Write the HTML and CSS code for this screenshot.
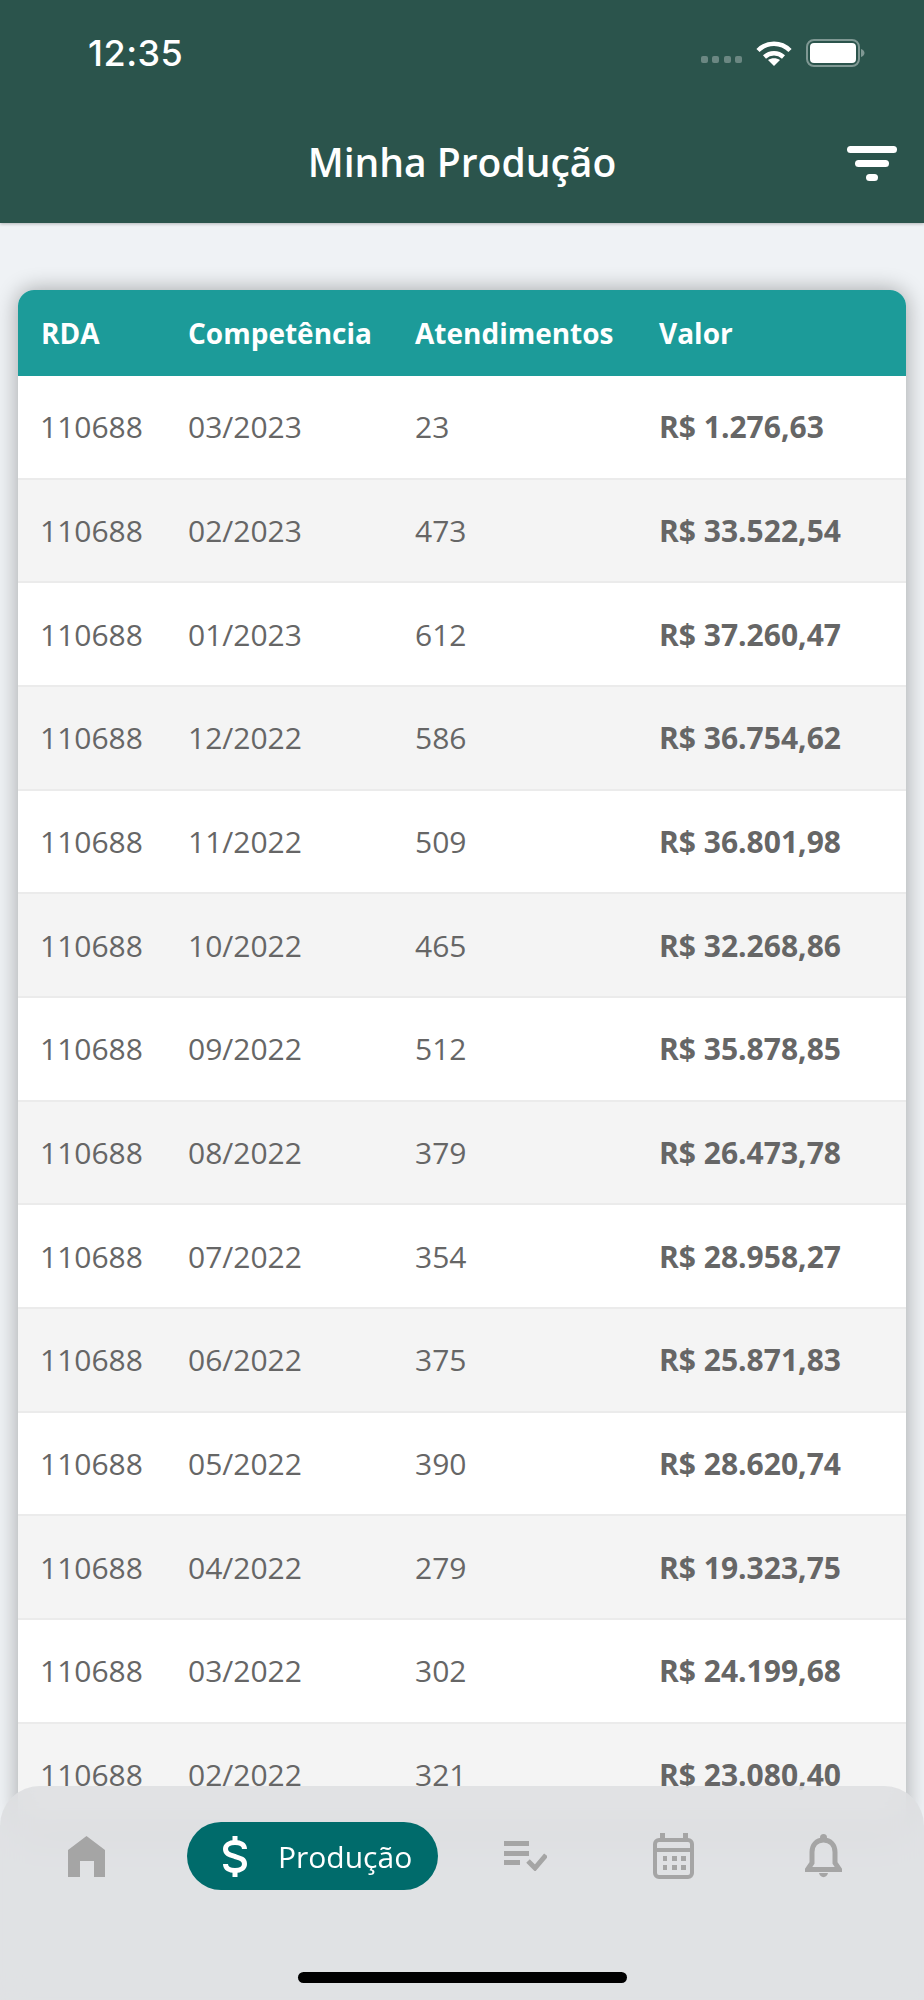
FILE: index.html
```html
<!DOCTYPE html>
<html lang="pt-BR">
<head>
  <meta charset="UTF-8">
  <title>Minha Produção</title>
  <meta name="viewport" content="width=device-width, initial-scale=1.0" />
  <link rel="stylesheet" href="styles.css">
</head>
<body>

  <header class="top-bar">
    <div class="status-bar">
      <span class="clock">12:35</span>
      <div class="status-icons">
        <div class="signal"><i></i><i></i><i></i><i></i></div>
        <svg class="wifi" width="36" height="27" viewBox="0 0 36 27">
          <path d="M2 11.500C11 2.500 25 2.500 34 11.500M8.500 18C14 13 22 13 27.500 18" fill="none" stroke="#fff" stroke-width="4.500" />
          <path d="M18 27L12 21C15.500 18.500 20.500 18.500 24 21Z" fill="#fff" />
        </svg>
        <svg class="battery" width="59" height="28" viewBox="0 0 59 28">
          <rect x="1" y="1" width="52" height="26" rx="7" fill="none" stroke="#fff" stroke-opacity=".4" stroke-width="2" />
          <rect x="4" y="4" width="46" height="20" rx="4" fill="#fff" />
          <path d="M55 10C57.500 11 58.500 12.500 58.500 14C58.500 15.500 57.500 17 55 18Z" fill="#fff" fill-opacity=".4" />
        </svg>
      </div>
    </div>
    <div class="nav-row">
      <h1>Minha Produção</h1>
      <div class="filter-icon"><i></i><i></i><i></i></div>
    </div>
  </header>

  <main class="content">
    <div class="table-card">
      <table>
        <thead>
          <tr><th>RDA</th><th>Competência</th><th>Atendimentos</th><th>Valor</th></tr>
        </thead>
        <tbody>
          <tr><td>110688</td><td>03/2023</td><td>23</td><td class="value">R$ 1.276,63</td></tr>
          <tr><td>110688</td><td>02/2023</td><td>473</td><td class="value">R$ 33.522,54</td></tr>
          <tr><td>110688</td><td>01/2023</td><td>612</td><td class="value">R$ 37.260,47</td></tr>
          <tr><td>110688</td><td>12/2022</td><td>586</td><td class="value">R$ 36.754,62</td></tr>
          <tr><td>110688</td><td>11/2022</td><td>509</td><td class="value">R$ 36.801,98</td></tr>
          <tr><td>110688</td><td>10/2022</td><td>465</td><td class="value">R$ 32.268,86</td></tr>
          <tr><td>110688</td><td>09/2022</td><td>512</td><td class="value">R$ 35.878,85</td></tr>
          <tr><td>110688</td><td>08/2022</td><td>379</td><td class="value">R$ 26.473,78</td></tr>
          <tr><td>110688</td><td>07/2022</td><td>354</td><td class="value">R$ 28.958,27</td></tr>
          <tr><td>110688</td><td>06/2022</td><td>375</td><td class="value">R$ 25.871,83</td></tr>
          <tr><td>110688</td><td>05/2022</td><td>390</td><td class="value">R$ 28.620,74</td></tr>
          <tr><td>110688</td><td>04/2022</td><td>279</td><td class="value">R$ 19.323,75</td></tr>
          <tr><td>110688</td><td>03/2022</td><td>302</td><td class="value">R$ 24.199,68</td></tr>
          <tr><td>110688</td><td>02/2022</td><td>321</td><td class="value">R$ 23.080,40</td></tr>
        </tbody>
      </table>
    </div>
  </main>

  <nav class="tab-bar">
    <div class="tab">
      <svg width="37" height="41" viewBox="0 0 37 41">
        <path d="M18.500 0L37 14V41H26V25H12V41H0V14Z" fill="#a5a5a5" />
      </svg>
    </div>
    <div class="tab">
      <div class="tab-pill">
        <svg width="24" height="41" viewBox="0 0 24 41">
          <path d="M21.500 13C21.500 8.500 17.500 6.500 12 6.500C6.500 6.500 2.500 9 2.500 13C2.500 18 7 19 12 20.500C17 22 21.500 23 21.500 28C21.500 32 17.500 34.500 12 34.500C6.500 34.500 2.500 32.500 2.500 28" fill="none" stroke="#fff" stroke-width="5" />
          <path d="M9.500 0H14.500V7H9.500ZM9.500 34H14.500V41H9.500Z" fill="#fff" />
        </svg>
        <span>Produção</span>
      </div>
    </div>
    <div class="tab">
      <svg width="44" height="30" viewBox="0 0 44 30">
        <path d="M1 0H26V5H1ZM1 10H26V15H1ZM1 19H17V24H1Z" fill="#a5a5a5" />
        <path d="M25 20L32 27L43 14" fill="none" stroke="#a5a5a5" stroke-width="5" />
      </svg>
    </div>
    <div class="tab">
      <svg width="41" height="46" viewBox="0 0 41 46">
        <rect x="2" y="7" width="37" height="37" rx="4" fill="none" stroke="#a5a5a5" stroke-width="4" />
        <path d="M7 0H12V6H7ZM30 0H35V6H30ZM2 15H39V19H2Z" fill="#a5a5a5" />
        <path d="M10 23H14V28H10ZM19 23H24V28H19ZM28 23H33V28H28ZM10 32H14V37H10ZM19 32H24V37H19ZM28 32H33V37H28Z" fill="#a5a5a5" />
      </svg>
    </div>
    <div class="tab">
      <svg width="37" height="44" viewBox="0 0 37 44">
        <circle cx="18.500" cy="3.500" r="3.500" fill="#a5a5a5" />
        <path d="M18.500 6C11.500 6 7 11 7 18V29L2.500 35.500H34.500L30 29V18C30 11 25.500 6 18.500 6Z" fill="none" stroke="#a5a5a5" stroke-width="5" />
        <path d="M14 39H23C22 44.500 15 44.500 14 39Z" fill="#a5a5a5" />
      </svg>
    </div>
    <div class="home-indicator"></div>
  </nav>

</body>
</html>
```

FILE: styles.css
```css
* {
  box-sizing: border-box;
}
body {
  margin: 0;
  height: 2000px;
  overflow: hidden;
  position: relative;
  background-color: #eff2f5;
  font-family: "Open Sans", sans-serif;
}
.top-bar {
  height: 223px;
  padding: 30px 27px 14px 88px;
  background-color: #2b544c;
  color: white;
  box-shadow: 0 1px 3px rgba(0, 0, 0, 0.25);
  position: relative;
}
.status-bar {
  display: flex;
  justify-content: space-between;
  align-items: center;
  height: 46px;
  padding-right: 32px;
}
.clock {
  font-family: Inter, sans-serif;
  font-size: 36px;
  font-weight: 500;
  letter-spacing: 0.5px;
}
.status-icons {
  display: flex;
  align-items: center;
  gap: 14px;
}
.signal {
  display: flex;
  gap: 4.5px;
  margin-top: 13px;
}
.signal i {
  width: 7px;
  height: 7px;
  border-radius: 2px;
  background: rgba(255, 255, 255, 0.3);
}
.wifi {
  margin-top: -1px;
}
.nav-row {
  display: grid;
  grid-template-columns: 1fr auto;
  align-items: center;
  height: 90px;
  margin: 42px 0 0 -88px;
}
.nav-row h1 {
  grid-column: 1 / 3;
  grid-row: 1;
  margin: 0;
  padding: 0 0 4px 27px;
  text-align: center;
  font-size: 39px;
  font-weight: 600;
}
.filter-icon {
  grid-column: 2;
  grid-row: 1;
  display: flex;
  flex-direction: column;
  align-items: center;
  gap: 7px;
  width: 50px;
}
.filter-icon i {
  height: 7px;
  border-radius: 4px;
  background: white;
}
.filter-icon i:nth-child(1) { width: 50px; }
.filter-icon i:nth-child(2) { width: 34px; }
.filter-icon i:nth-child(3) { width: 12px; }
.content {
  padding: 67px 18px 0;
}
.table-card {
  border-radius: 16px;
  overflow: hidden;
  box-shadow: 0 0 22px rgba(0, 0, 0, 0.33);
  background: white;
}
.table-card table {
  width: 100%;
  border-collapse: separate;
  border-spacing: 0;
  table-layout: fixed;
}
.table-card th,
.table-card td {
  padding: 0;
  text-align: left;
}
.table-card th:nth-child(1) { width: 170px; padding-left: 23px; }
.table-card th:nth-child(2) { width: 227px; }
.table-card th:nth-child(3) { width: 244px; }
.table-card td:first-child { padding-left: 22px; }
.table-card thead tr {
  background-color: #1c9b99;
  color: white;
}
.table-card th {
  height: 86px;
  font-size: 28px;
  font-weight: 700;
}
.table-card tbody tr {
  color: #666;
}
.table-card tbody tr:nth-child(even) {
  background-color: #f4f4f4;
}
.table-card td {
  height: 103.67px;
  border-bottom: 2px solid #ebebeb;
  font-size: 30px;
  font-weight: 400;
}
.table-card td.value {
  font-weight: 700;
}
.tab-bar {
  position: absolute;
  left: 0;
  right: 0;
  bottom: 0;
  height: 214px;
  padding-top: 36px;
  display: grid;
  grid-template-columns: 172px 281px 144px 152px 148px;
  grid-template-rows: 68px;
  align-items: center;
  border-radius: 40px 40px 0 0;
  background: rgba(220, 221, 224, 0.8);
  backdrop-filter: blur(14px);
}
.tab {
  display: flex;
  justify-content: center;
  align-items: center;
}
.tab-pill {
  display: flex;
  align-items: center;
  gap: 31px;
  width: 251px;
  height: 68px;
  padding-left: 36px;
  border-radius: 34px;
  background-color: #006b6b;
  color: white;
  font-size: 30px;
}
.home-indicator {
  position: absolute;
  left: 298px;
  bottom: 17px;
  width: 329px;
  height: 11px;
  border-radius: 6px;
  background: black;
}
```
